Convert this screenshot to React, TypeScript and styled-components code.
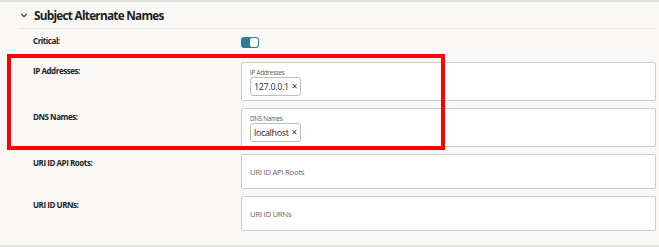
import React from 'react'
import styled, { createGlobalStyle } from 'styled-components'

const GlobalStyle = createGlobalStyle`
  html, body {
    margin: 0;
    padding: 0;
    background: #f9f8f6;
    font-family: 'Open Sans', 'Noto Sans', sans-serif;
    color: #1f1f1f;
  }
`

const Page = styled.div`
  position: relative;
  width: 659px;
  height: 247px;
  overflow: hidden;
  background: #f9f8f6;
  border-top: 2px solid #dedfdc;
  box-sizing: border-box;
`

const Section = styled.section`
  display: flex;
  flex-direction: column;
  padding-right: 3px;
  height: 100%;
  box-sizing: border-box;
  border-bottom: 2px solid #e2e2e0;
`

const Header = styled.div`
  display: flex;
  align-items: center;
  gap: 6px;
  height: 26px;
  margin-left: 20px;
  border-bottom: 1px solid #e7e6e3;
`

const Chevron = styled.svg`
  width: 8px;
  height: 8px;
  color: #333;
`

const Title = styled.h2`
  margin: 0;
  font-size: 11.8px;
  font-weight: 700;
  letter-spacing: -0.75px;
  color: #1d1d1d;
`

const Rows = styled.div`
  display: grid;
  grid-template-columns: 208px 1fr;
  row-gap: 7px;
  padding: 4px 0 0 33px;
`

const Label = styled.div<{ $pad?: number }>`
  font-size: 8px;
  font-weight: 700;
  letter-spacing: -0.45px;
  padding-top: ${p => p.$pad ?? 3}px;
  color: #222;
`

const ToggleCell = styled.div`
  height: 22px;
  padding-top: 4px;
  box-sizing: border-box;
`

const Toggle = styled.div`
  width: 18px;
  height: 11px;
  border-radius: 3px;
  background: #2c7c9a;
  display: flex;
  justify-content: flex-end;
  align-items: center;
  padding: 1px;
  box-sizing: border-box;
`

const Knob = styled.div`
  width: 8px;
  height: 9px;
  border-radius: 2px;
  background: #fff;
`

const Field = styled.div<{ $h: number }>`
  height: ${p => p.$h}px;
  box-sizing: border-box;
  background: #fff;
  border: 1px solid #cbcbca;
  border-radius: 2px;
  display: flex;
  flex-direction: column;
  justify-content: center;
  padding: 0 8px;
`

const FloatLabel = styled.div`
  font-size: 6.2px;
  letter-spacing: -0.2px;
  color: #555;
  line-height: 8px;
  margin-top: 1px;
`

const Chip = styled.span`
  display: inline-flex;
  align-items: center;
  align-self: flex-start;
  gap: 3px;
  height: 19px;
  box-sizing: border-box;
  padding: 0 3px;
  border: 1px solid #bdbdbd;
  border-radius: 3px;
  font-size: 9px;
  letter-spacing: -0.35px;
  color: #2a2a2a;
`

const Close = styled.span`
  font-size: 10px;
  color: #333;
`

const Placeholder = styled.span`
  font-size: 7.8px;
  letter-spacing: -0.3px;
  color: #666;
`

const Annotation = styled.div`
  position: absolute;
  left: 7px;
  top: 52px;
  width: 438px;
  height: 96px;
  box-sizing: border-box;
  border: 4.5px solid #ff0000;
  pointer-events: none;
`

const chips = [
  { label: 'IP Addresses', value: '127.0.0.1' },
  { label: 'DNS Names', value: 'localhost' }
]

const empty = ['URI ID API Roots', 'URI ID URNs']

export default function App() {
  return (
    <Page>
      <GlobalStyle />
      <Section>
        <Header>
          <Chevron viewBox='0 0 10 10'>
            <path d='M1.5 3.5 L5 7 L8.5 3.5' fill='none' stroke='currentColor' strokeWidth='1.4' />
          </Chevron>
          <Title>Subject Alternate Names</Title>
        </Header>
        <Rows>
          <Label $pad={2}>Critical:</Label>
          <ToggleCell>
            <Toggle>
              <Knob />
            </Toggle>
          </ToggleCell>
          {chips.map(c => (
            <React.Fragment key={c.label}>
              <Label>{c.label}:</Label>
              <Field $h={39}>
                <FloatLabel>{c.label}</FloatLabel>
                <Chip>
                  {c.value}
                  <Close>×</Close>
                </Chip>
              </Field>
            </React.Fragment>
          ))}
          {empty.map(e => (
            <React.Fragment key={e}>
              <Label>{e}:</Label>
              <Field $h={35}>
                <Placeholder>{e}</Placeholder>
              </Field>
            </React.Fragment>
          ))}
        </Rows>
      </Section>
      <Annotation />
    </Page>
  )
}
